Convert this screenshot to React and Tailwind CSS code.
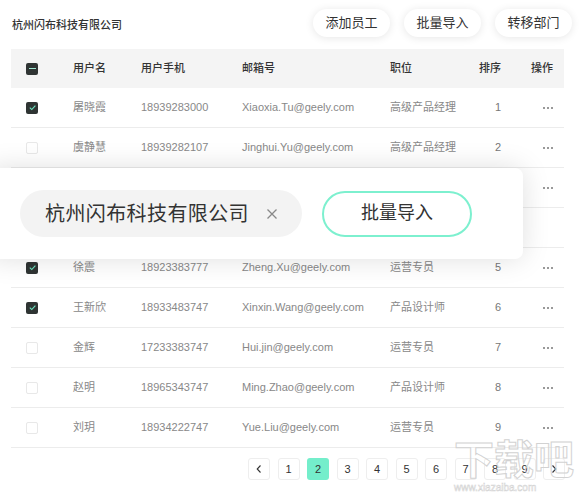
import React from 'react'

const rows = [
  { checked: true, name: '屠晓霞', phone: '18939283000', email: 'Xiaoxia.Tu@geely.com', role: '高级产品经理', sort: 1 },
  { checked: false, name: '虞静慧', phone: '18939282107', email: 'Jinghui.Yu@geely.com', role: '高级产品经理', sort: 2 },
  { checked: false, name: '', phone: '', email: '', role: '', sort: '', dots: true },
  { checked: false, name: '', phone: '', email: '', role: '', sort: '', dots: false, blank: true },
  { checked: true, name: '徐震', phone: '18923383777', email: 'Zheng.Xu@geely.com', role: '运营专员', sort: 5 },
  { checked: true, name: '王新欣', phone: '18933483747', email: 'Xinxin.Wang@geely.com', role: '产品设计师', sort: 6 },
  { checked: false, name: '金辉', phone: '17233383747', email: 'Hui.jin@geely.com', role: '运营专员', sort: 7 },
  { checked: false, name: '赵明', phone: '18965343747', email: 'Ming.Zhao@geely.com', role: '产品设计师', sort: 8 },
  { checked: false, name: '刘玥', phone: '18934222747', email: 'Yue.Liu@geely.com', role: '运营专员', sort: 9 },
]

function Checkbox({ state }) {
  if (state === 'none') {
    return <span className="block w-[12px] h-[12px] rounded-[2px] border border-[#e8e8e8] bg-white" />
  }
  return (
    <span className="flex items-center justify-center w-[12px] h-[12px] rounded-[2px] bg-[#2f3433]">
      {state === 'checked' ? (
        <svg width="9" height="9" viewBox="0 0 10 10">
          <path d="M2 5.2 L4.2 7.3 L8.2 2.8" fill="none" stroke="#6ee8c4" strokeWidth="1.2" />
        </svg>
      ) : (
        <span className="block w-[7px] h-[1.5px] bg-[#9fe8d2]" />
      )}
    </span>
  )
}

function Dots() {
  return (
    <span className="flex gap-[2px]">
      <span className="w-[2px] h-[2px] rounded-full bg-[#777]" />
      <span className="w-[2px] h-[2px] rounded-full bg-[#777]" />
      <span className="w-[2px] h-[2px] rounded-full bg-[#777]" />
    </span>
  )
}

export default function App() {
  const pages = ['<', 1, 2, 3, 4, 5, 6, 7, 8, 9, '>']

  return (
    <div
      className="relative w-[584px] h-[501px] overflow-hidden bg-white"
      style={{ fontFamily: '"Liberation Sans", "Noto Sans CJK SC", sans-serif' }}
    >
      {/* Top bar */}
      <div className="flex items-center h-[49px] pl-[12px] pr-[12px]">
        <div className="text-[11px] font-medium text-[#333] mt-[2px] whitespace-nowrap">杭州闪布科技有限公司</div>
        <div className="ml-auto flex gap-[14px] -mt-[4px]">
          {['添加员工', '批量导入', '转移部门'].map((t) => (
            <button
              key={t}
              className="h-[28px] w-[77px] rounded-full bg-white text-[13px] text-[#333] whitespace-nowrap shadow-[0_1px_8px_rgba(0,0,0,0.10)]"
            >
              {t}
            </button>
          ))}
        </div>
      </div>

      {/* Table */}
      <div className="ml-[11px] w-[553px] text-[11px] whitespace-nowrap">
        <div className="flex items-center h-[39px] bg-[#f4f4f4] text-[#333] font-medium">
          <div className="w-[62px] pl-[15px]"><Checkbox state="partial" /></div>
          <div className="w-[68px]">用户名</div>
          <div className="w-[101px]">用户手机</div>
          <div className="w-[148px]">邮箱号</div>
          <div className="w-[91px]">职位</div>
          <div className="w-[20px] flex justify-end">排序</div>
          <div className="w-[22px] ml-[30px]">操作</div>
        </div>
        {rows.map((r, i) => (
          <div key={i} className="flex items-center h-[40px] border-b border-[#ececec] text-[#888]">
            <div className="w-[62px] pl-[15px]">
              {!r.blank && r.name !== '' && <Checkbox state={r.checked ? 'checked' : 'none'} />}
            </div>
            <div className="w-[68px]">{r.name}</div>
            <div className="w-[101px]">{r.phone}</div>
            <div className="w-[148px]">{r.email}</div>
            <div className="w-[91px]">{r.role}</div>
            <div className="w-[20px] text-right text-[#777]">{r.sort}</div>
            <div className="w-[22px] ml-[30px] flex justify-end">
              {(r.name !== '' || r.dots) && <Dots />}
            </div>
          </div>
        ))}
      </div>

      {/* Pagination */}
      <div className="flex gap-[7.5px] ml-[248px] mt-[10px]">
        {pages.map((p, i) => (
          <div
            key={i}
            className={
              p === 2
                ? 'w-[22px] h-[22px] rounded-[3px] bg-[#74eecb] flex items-center justify-center text-[11px] text-[#333]'
                : 'w-[22px] h-[22px] rounded-[3px] border border-[#eeeeee] flex items-center justify-center text-[11px] text-[#333]'
            }
          >
            {p === '<' ? (
              <svg width="8" height="10" viewBox="0 0 8 10"><path d="M5.5 1.5 L2.2 5 L5.5 8.5" fill="none" stroke="#333" strokeWidth="1.1" /></svg>
            ) : p === '>' ? (
              <svg width="8" height="10" viewBox="0 0 8 10"><path d="M2.5 1.5 L5.8 5 L2.5 8.5" fill="none" stroke="#333" strokeWidth="1.1" /></svg>
            ) : (
              p
            )}
          </div>
        ))}
      </div>

      {/* Floating batch import card */}
      <div className="absolute left-[-12px] top-[168px] w-[535px] h-[91px] rounded-[8px] bg-white shadow-[0_0_28px_rgba(0,0,0,0.13)] flex items-center pl-[32px]">
        <div className="flex items-center w-[282px] h-[47px] rounded-full bg-[#f3f3f3] pl-[25px]">
          <span className="text-[20px] text-[#333] whitespace-nowrap tracking-[0.4px]">杭州闪布科技有限公司</span>
          <svg className="ml-[17px] shrink-0" width="12" height="12" viewBox="0 0 12 12">
            <path d="M1.5 1.5 L10.5 10.5 M10.5 1.5 L1.5 10.5" stroke="#888" strokeWidth="1.3" />
          </svg>
        </div>
        <button className="ml-[20px] w-[150px] h-[46px] rounded-full border-2 border-[#7df0cf] bg-white text-[18px] text-[#333] whitespace-nowrap">
          批量导入
        </button>
      </div>

      {/* Watermark */}
      <div className="absolute left-[454px] top-[438px] pointer-events-none select-none whitespace-nowrap">
        <div className="text-[40px] leading-[44px] font-bold text-transparent [-webkit-text-stroke:1px_#d2d2d2]">下载吧</div>
        <div className="text-[10px] leading-[12px] text-transparent [-webkit-text-stroke:0.5px_#d2d2d2]">www.xiazaiba.com</div>
      </div>
    </div>
  )
}
